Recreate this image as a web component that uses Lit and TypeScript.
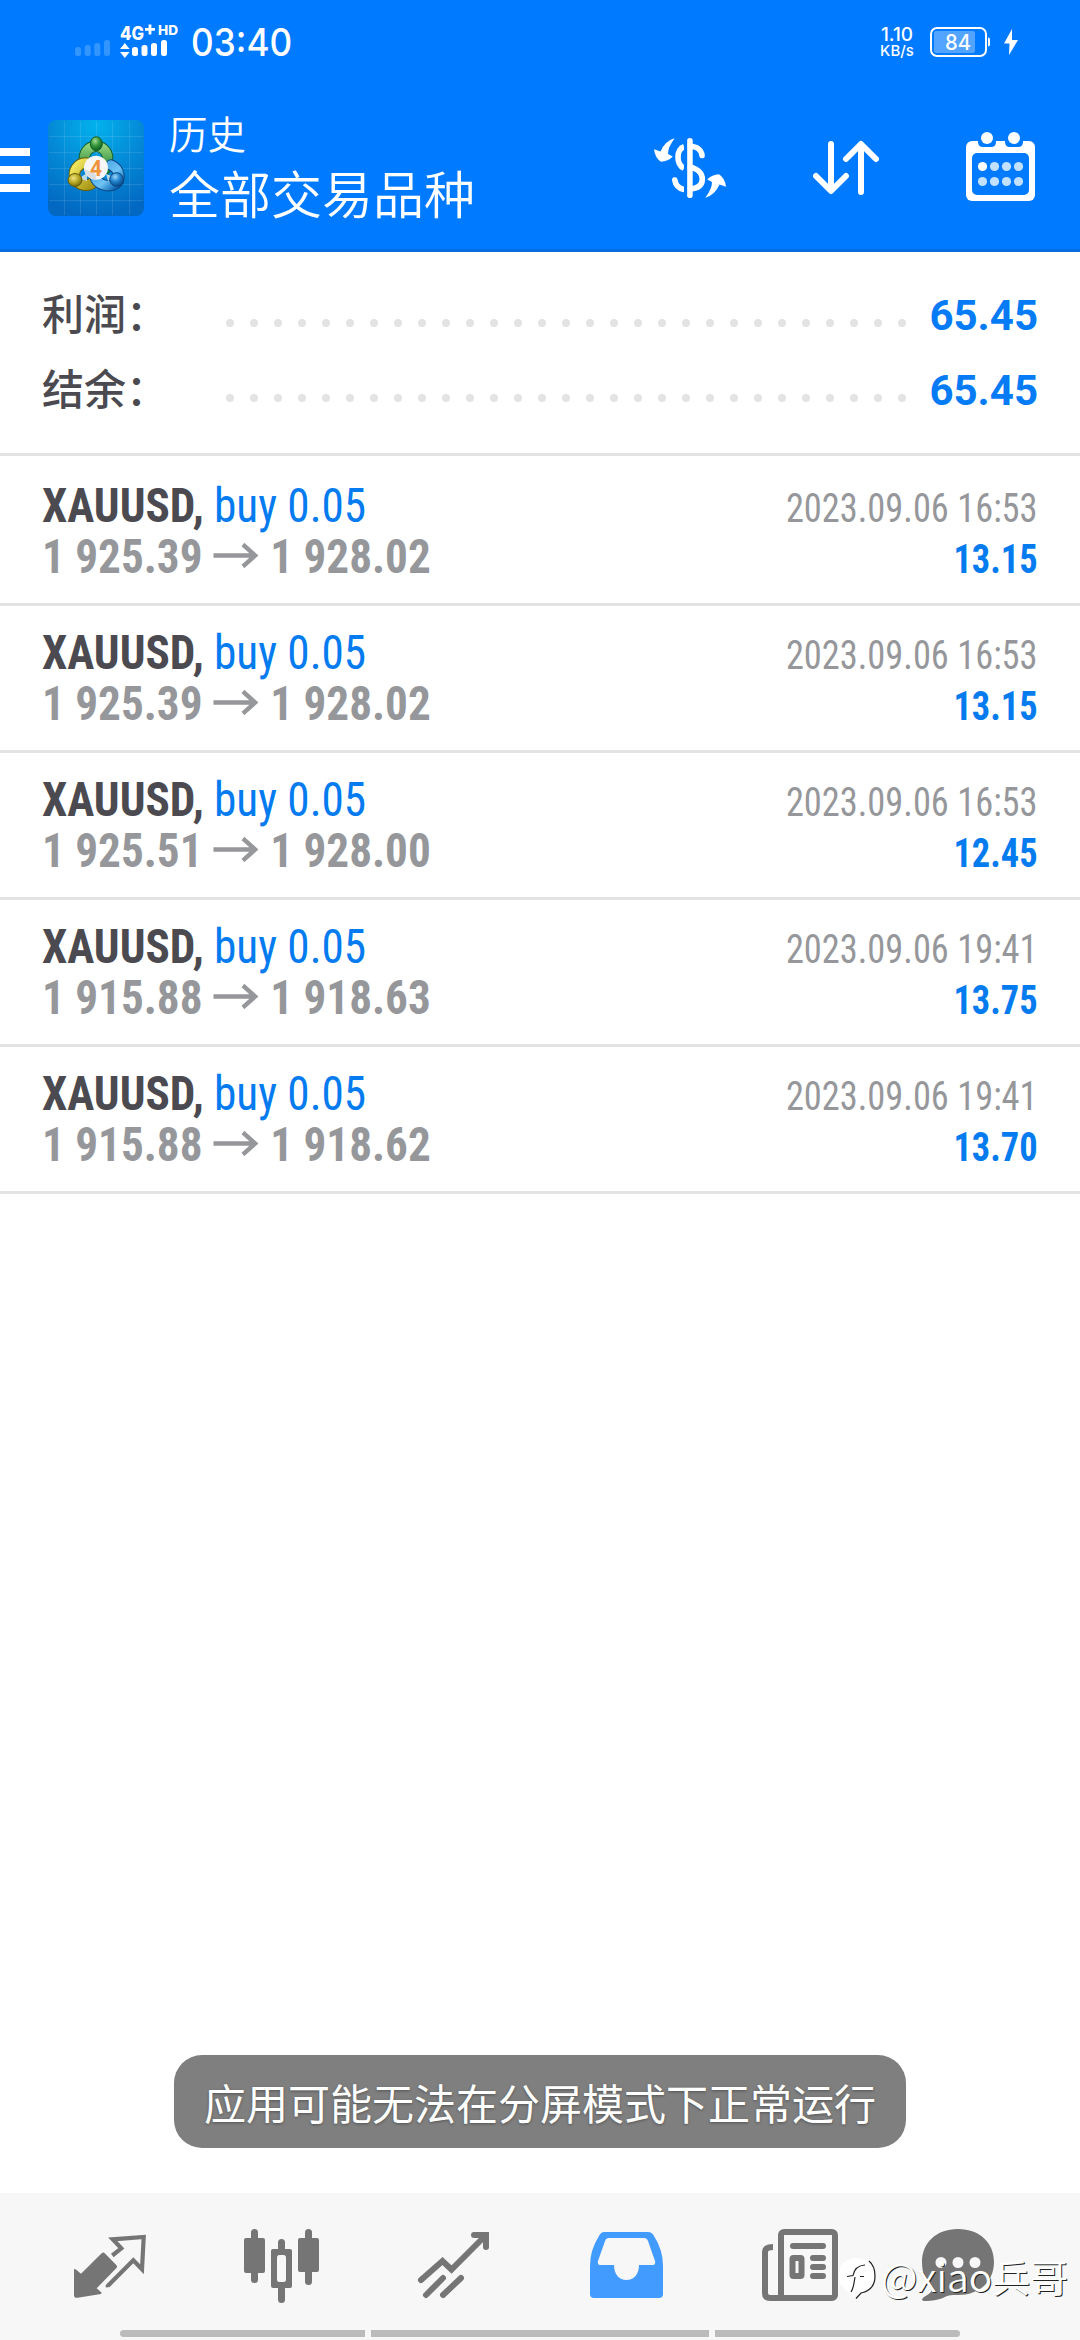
import { LitElement, html, css, svg } from "lit";
import { customElement, property } from "lit/decorators.js";

interface Deal {
  open: string;
  close: string;
  time: string;
  profit: string;
}

const DEALS: Deal[] = [
  { open: "1 925.39", close: "1 928.02", time: "2023.09.06 16:53", profit: "13.15" },
  { open: "1 925.39", close: "1 928.02", time: "2023.09.06 16:53", profit: "13.15" },
  { open: "1 925.51", close: "1 928.00", time: "2023.09.06 16:53", profit: "12.45" },
  { open: "1 915.88", close: "1 918.63", time: "2023.09.06 19:41", profit: "13.75" },
  { open: "1 915.88", close: "1 918.62", time: "2023.09.06 19:41", profit: "13.70" },
];

@customElement("status-bar")
export class StatusBar extends LitElement {
  static styles = css`
    :host { display: flex; justify-content: space-between; height: 84px; box-sizing: border-box;
      padding: 24px 60px 0 75px; color: #fff; font-family: Inter, "Liberation Sans", sans-serif; }
    .side { display: flex; align-items: flex-start; }
    .sim1 { display: block; margin-top: 16px; }
    .sim2 { display: block; margin-left: 10px; overflow: visible; }
    .clock { font-size: 38px; line-height: 38px; font-weight: 500; margin: -1px 0 0 11px; transform: scaleX(0.925); transform-origin: 0 0; }
    .rate { font-size: 19px; line-height: 17px; font-weight: 500; text-align: center; margin: 2px 15px 0 0; width: 36px; }
    .unit { font-size: 15px; line-height: 16px; }
    .battery { display: block; margin-top: 3px; }
    .level { font: 500 22px Inter, sans-serif; }
    .mark { font: 800 18.5px Inter, sans-serif; }
    .hd { font: 800 13px Inter, sans-serif; }
  `;
  render() {
    return html`
      <div class="side">
        <svg class="sim1" width="35" height="16" fill="#3396ff">
          <rect x="0" y="7" width="6" height="9" rx="2.5" /><rect x="9.7" y="5" width="6" height="11" rx="2.5" />
          <rect x="19.3" y="3" width="6" height="13" rx="2.5" /><rect x="29" y="0" width="6" height="16" rx="2.5" />
        </svg>
        <svg class="sim2" width="60" height="36" fill="#fff">
          <text class="mark" x="0" y="15.500" textLength="24" lengthAdjust="spacingAndGlyphs">4G</text>
          <path d="M25 5.300h10M30 .5v10" stroke="#fff" stroke-width="2.8" />
          <text class="hd" x="38" y="11" textLength="20" lengthAdjust="spacingAndGlyphs">HD</text>
          <path d="M4.8 19l4.8 6H0zM4.8 34l4.8-6H0z" />
          <rect x="12" y="23" width="6" height="9" rx="2.5" /><rect x="21.5" y="21" width="6" height="11" rx="2.5" />
          <rect x="31" y="19" width="6" height="13" rx="2.5" /><rect x="41" y="16" width="6" height="16" rx="2.5" />
        </svg>
        <div class="clock">03:40</div>
      </div>
      <div class="side">
        <div class="rate">1.10<div class="unit">KB/s</div></div>
        <svg class="battery" width="90" height="30">
          <rect x="1" y="1" width="55" height="28" rx="6" fill="none" stroke="#fff" stroke-width="2" />
          <rect x="4" y="4" width="41" height="22" rx="2" fill="#52a4ff" />
          <path d="M58 10.5q2 0 2 2v5q0 2-2 2z" fill="#fff" />
          <text class="level" x="15" y="23" textLength="26" lengthAdjust="spacingAndGlyphs" fill="#fff">84</text>
          <path d="M82 2L74 16.500h5.500L79 28l9-15h-6z" fill="#fff" />
        </svg>
      </div>`;
  }
}

@customElement("app-bar")
export class AppBar extends LitElement {
  static styles = css`
    :host { display: flex; height: 168px; box-sizing: border-box; border-bottom: 3px solid #0a6ddd; color: #fff;
      font-family: "Noto Sans CJK SC", sans-serif; }
    .menu { display: block; margin-top: 64px; }
    .logo { display: block; margin: 36px 0 0 18px; }
    .four { font: 700 22px Roboto, sans-serif; }
    .titles { margin: 21px 0 0 25px; flex: 1; }
    .title { font-size: 38.500px; line-height: 54px; font-weight: 350; }
    .subtitle { font-size: 51px; line-height: 66px; font-weight: 350; }
    .actions { display: flex; gap: 87px; margin: 48px 45px 0 0; }
    .actions svg { display: block; }
  `;
  render() {
    return html`
      <svg class="menu" width="30" height="44" fill="#fff">
        <rect width="30" height="8" /><rect y="18" width="30" height="8" /><rect y="36" width="30" height="8" />
      </svg>
      <svg class="logo" width="96" height="96" viewBox="0 0 96 96">
        <defs>
          <radialGradient id="bg" cx=".5" cy=".05" r=".95">
            <stop offset="0" stop-color="#02b2ec" /><stop offset=".5" stop-color="#048ad7" /><stop offset="1" stop-color="#0268c1" />
          </radialGradient>
          <linearGradient id="gr" x2="0" y2="1"><stop stop-color="#8fd07a" /><stop offset="1" stop-color="#1f8435" /></linearGradient>
          <linearGradient id="ye" x2="1" y2="1"><stop stop-color="#f5ea62" /><stop offset="1" stop-color="#a39210" /></linearGradient>
          <linearGradient id="bl" x2="1" y2="1"><stop stop-color="#3c9ce0" /><stop offset=".6" stop-color="#70c4f4" /><stop offset="1" stop-color="#0b67b4" /></linearGradient>
          <radialGradient id="gb" cx=".4" cy=".3" r=".7"><stop stop-color="#a6dd97" /><stop offset=".5" stop-color="#38983c" /><stop offset="1" stop-color="#0f5f22" /></radialGradient>
          <radialGradient id="yb" cx=".4" cy=".35" r=".7"><stop stop-color="#f0e584" /><stop offset=".5" stop-color="#b9a925" /><stop offset="1" stop-color="#6c6410" /></radialGradient>
          <radialGradient id="bb" cx=".4" cy=".3" r=".7"><stop stop-color="#9bd8fa" /><stop offset=".5" stop-color="#2184cd" /><stop offset="1" stop-color="#0a4c8d" /></radialGradient>
        </defs>
        <rect width="96" height="96" rx="8" fill="url(#bg)" />
        <path d="M16.500 1v94M32.500 1v94M48.500 1v94M64.500 1v94M81.500 1v94M1 16.500h94M1 32.500h94M1 48.500h94M1 64.500h94M1 80.500h94" stroke="#fff" stroke-opacity=".11" />
        <g fill="none" stroke-linecap="round">
          <path d="M37 41a11.500 11.500 0 1 1 22 0l-2 8" stroke="#145f2c" stroke-width="11.500" />
          <path d="M37 41a11.500 11.500 0 1 1 22 0l-2 8" stroke="url(#gr)" stroke-width="9.500" />
          <path d="M38 43c-8 0-14 8-10.500 16 4 7.500 14 8.500 19 2" stroke="#665c0c" stroke-width="11.500" />
          <path d="M38 43c-8 0-14 8-10.500 16 4 7.500 14 8.500 19 2" stroke="url(#ye)" stroke-width="9.500" />
          <path d="M63 45c9 4 10.500 15 4 19-8 4-18 0-20-7" stroke="#0c4683" stroke-width="11.500" />
          <path d="M63 45c9 4 10.500 15 4 19-8 4-18 0-20-7" stroke="url(#bl)" stroke-width="9.500" />
        </g>
        <path d="M30 59l9-6v8zM67 57l-9-3 2 7z" fill="#e8f0f0" fill-opacity=".8" />
        <ellipse cx="48.300" cy="23.700" rx="6" ry="7" fill="url(#gb)" stroke="#145f2c" />
        <ellipse cx="27" cy="60" rx="7" ry="6.500" fill="url(#yb)" stroke="#665c0c" />
        <circle cx="68.500" cy="59.500" r="6.800" fill="url(#bb)" stroke="#0c4683" />
        <circle cx="48" cy="47.700" r="12" fill="#f6f6f7" />
        <path d="M36.200 50q6 0 11.800 5v4.500a12 12 0 0 1-11.800-9.500z" fill="#d9dce0" />
        <text class="four" x="48" y="55.500" text-anchor="middle" fill="#f0933a" textLength="12" lengthAdjust="spacingAndGlyphs">4</text>
      </svg>
      <div class="titles">
        <div class="title">历史</div>
        <div class="subtitle">全部交易品种</div>
      </div>
      <div class="actions">
        <svg width="72" height="72" viewBox="654 132 72 72">
          <g fill="none" stroke="#fff" stroke-width="5.600" stroke-linecap="round">
            <path d="M689.900 140.800v54.400" />
            <path d="M684 146.700C676.500 149 675.500 164 684 168.300" stroke-linecap="butt" />
            <path d="M690 146.300C697 146.500 701.500 150 702 155.500M690 167C699 169.500 702.300 173 702.300 179.300 702.300 185 698.300 188.300 690.300 189" />
            <path d="M674.800 180C675.500 185 679 188.500 683 189.300" />
          </g>
          <path d="M684 140h3.100v54.500H684z" fill="#007aff" />
          <path d="M674.700 138.300Q665 141 660.500 151.500L654 149.300Q655 158 661 161.800 668 161.500 672.800 156.500L668 154Q668 147 674.700 138.300z" fill="#fff" />
          <path d="M705.300 197.700Q715 195 719.500 184.500L726 186.700Q725 178 719 174.200 712 174.500 707.200 179.500L712 182Q712 189 705.300 197.700z" fill="#fff" />
        </svg>
        <svg width="66" height="72" viewBox="813 132 66 72" fill="none" stroke="#fff" stroke-width="6" stroke-linecap="round" stroke-linejoin="round">
          <path d="M831 144v46M816 176l15 15 15-15M861 192v-46M846 159l15-15 15 15" />
        </svg>
        <svg width="69" height="72" viewBox="966 132 69 72">
          <rect x="966" y="141" width="69" height="60" rx="6" fill="#fff" />
          <rect x="972" y="153" width="57" height="42" rx="5" fill="#007aff" />
          <path d="M978 140v2q0 5 5 5h8q5 0 5-5v-2zM1005 140v2q0 5 5 5h8q5 0 5-5v-2z" fill="#007aff" />
          <circle cx="987" cy="138" r="6" fill="#fff" /><circle cx="1014" cy="138" r="6" fill="#fff" />
          ${[0, 1, 2, 3, 4, 5, 6, 7].map(
            (i) => svg`<circle cx=${982.5 + (i % 4) * 12} cy=${166.5 + Math.floor(i / 4) * 15} r="4.6" fill=${i === 0 ? "#fff" : "#c2e0ff"} />`
          )}
        </svg>
      </div>`;
  }
}

@customElement("summary-panel")
export class SummaryPanel extends LitElement {
  static styles = css`
    :host { display: block; height: 204px; box-sizing: border-box; padding: 26px 42px 0; border-bottom: 3px solid #e3e3e3; }
    .line { display: flex; align-items: center; height: 75px; }
    .label { width: 188px; height: 75px; font: 500 42px/68px "Noto Sans CJK SC", sans-serif; color: #4b4a50; }
    .dots { display: flex; flex: none; justify-content: space-between; width: 680px; margin: 14px 0 0 -4px; }
    .dot { width: 8px; height: 8px; border-radius: 50%; background: #e3e3e3; }
    .value { flex: 1; text-align: right; font: 700 42px/75px Roboto, sans-serif; color: #057bf5; }
  `;
  render() {
    return html`${["利润：", "结余："].map(
      (label) => html`<div class="line">
        <div class="label">${label}</div>
        <div class="dots">${Array.from({ length: 29 }, () => html`<span class="dot"></span>`)}</div>
        <div class="value">65.45</div>
      </div>`
    )}`;
  }
}

@customElement("deal-row")
export class DealRow extends LitElement {
  static styles = css`
    :host { display: flex; justify-content: space-between; height: 147px; box-sizing: border-box; padding: 21px 42px 0;
      border-bottom: 3px solid #e3e3e3; font-family: "Roboto Condensed", Roboto, sans-serif; font-stretch: 75%; white-space: nowrap; }
    .main { font-size: 48px; line-height: 51px; transform: scaleX(0.941); transform-origin: 0 0; }
    .symbol { font-weight: 700; color: #4b4a50; }
    .side { color: #057bf0; }
    .prices { display: flex; font-weight: 700; color: #96979b; }
    .arrow { display: block; margin: 11px 12px 0 11px; }
    .info { text-align: right; font-size: 40px; line-height: 51px; padding-top: 3px; transform: scaleX(0.91); transform-origin: 100% 0; }
    .time { color: #96979b; }
    .profit { font-weight: 700; color: #057bf0; }
  `;
  @property({ attribute: false }) deal!: Deal;
  render() {
    const d = this.deal;
    return html`
      <div class="main">
        <div><span class="symbol">XAUUSD,</span> <span class="side">buy 0.05</span></div>
        <div class="prices">${d.open}<svg class="arrow" width="49" height="26" fill="none" stroke="#96979b" stroke-width="4.500"><path d="M0 13.500h45M31.500 2.500l13 11-13 11" /></svg>${d.close}</div>
      </div>
      <div class="info">
        <div class="time">${d.time}</div>
        <div class="profit">${d.profit}</div>
      </div>`;
  }
}

@customElement("nav-bar")
export class NavBar extends LitElement {
  static styles = css`
    :host { display: block; position: relative; height: 147px; background: #f7f7f7; }
    .tabs { display: block; height: 137px; }
    .home { display: flex; gap: 6px; padding: 0 120px; height: 7px; }
    .seg { background: #bbb; flex: 245; }
    .mid { flex: 338; }
    .first { border-radius: 4px 0 0 4px; }
    .last { border-radius: 0 4px 4px 0; }
    .mark { position: absolute; left: 838px; top: 57px; display: flex; align-items: center; gap: 5px;
      color: #fff; font: 350 38px/50px "Noto Sans CJK SC", sans-serif; text-shadow: 1px 1px 0 #222; white-space: nowrap; }
    .latin { font-size: 39px; }
    .mark svg { display: block; margin-top: 7px; }
  `;
  render() {
    return html`
      <svg class="tabs" width="1080" height="137" viewBox="0 2193 1080 137" fill="#757575">
        <path d="M74 2269l2 .4 5 4.300 20.700-20.400q1.600-1.800 3.300.2l11 11.200q2.200 1.800.2 3.600l-19.500 20 5 4.400-.7 1.300-23.500 3.800q-3.500.4-3.500-2.800z" />
        <g fill="none" stroke="#757575" stroke-width="4.200">
          <path d="M112.300 2255.500l9-7.200-8.600-9 31-2.300-1.700 32.300-8.700-9-25.600 25.700" />
        </g>
        <circle cx="107" cy="2286" r="1.500" />
        <rect x="244" y="2238" width="21" height="35" rx="2" /><rect x="251" y="2229" width="7" height="54" rx="3.500" />
        <rect x="298" y="2238" width="21" height="34" rx="2" /><rect x="305" y="2229" width="7" height="56" rx="3.500" />
        <rect x="278" y="2239" width="7" height="64" rx="3.500" /><rect x="271" y="2249" width="21" height="39" rx="2" />
        <rect x="277" y="2255" width="9" height="27" rx="2.500" fill="#f7f7f7" />
        <g fill="none" stroke="#757575" stroke-width="6" stroke-linecap="round">
          <path d="M421 2280l21.500-19 9 8.500 34-34M474 2235h12v12" />
          <path d="M426 2295l17-17M443 2295l18-17" />
        </g>
        <path fill="#429bff" fill-rule="evenodd" d="M604 2232h44q4 0 6 4 9 14 9 30v28q0 4-4 4h-65q-4 0-4-4v-28q0-16 9-30 2-4 5-4zM609 2238q-3 0-4 3l-7 20q-1 4 3 4h13c0 9 5 15 12.500 15s12.500-6 12.500-15h13q4 0 3-4l-7-20q-1-3-4-3z" />
        <g fill="none" stroke="#757575" stroke-width="6">
          <rect x="781" y="2232" width="54" height="66" rx="3" />
          <path d="M773 2247q-8 0-8 5v41q0 5 5 5h14" />
        </g>
        <g stroke="#757575" stroke-width="6" stroke-linecap="round">
          <path d="M793 2246h30M813 2258h10M813 2267h10M813 2276h10" />
          <rect x="792.500" y="2258" width="9" height="18" rx="1" fill="none" stroke-linejoin="round" />
        </g>
        <path d="M958 2229c22 0 36 14 36 33s-14 33-36 33c-6 0-8 0-11 1-7 4-15 5-23 5q-4-1 0-4c5-3 8-5 8-8-6-7-10-15-10-27 0-19 14-33 36-33z" />
        <g fill="#f7f7f7"><circle cx="941" cy="2262.500" r="5.500" /><circle cx="958" cy="2262.500" r="5.500" /><circle cx="975" cy="2262.500" r="5.500" /></g>
      </svg>
      <div class="home"><span class="seg first"></span><span class="seg mid"></span><span class="seg last"></span></div>
      <div class="mark">
        <svg width="38" height="44" viewBox="0 0 38 44">
          <path d="M15 41l5-4Q36 34 36 19 36 1 18 1 1 2 1 19q0 12 10 16" fill="#fff" />
          <path d="M18 41.500l5-5.500Q37 33 37 19 37 9 31 4" fill="none" stroke="#222" stroke-width="1.200" />
          <path d="M9 19.500l6-1q2-10 12-10.500M13 35q2-3 3-9l1-6M22 19.500h4" fill="none" stroke="#222" stroke-width="1.200" />
        </svg>
        <span><span class="latin">@xiao</span>兵哥</span>
      </div>`;
  }
}

@customElement("app-root")
export class AppRoot extends LitElement {
  static styles = css`
    :host { display: flex; flex-direction: column; width: 1080px; height: 2340px; background: #fff; overflow: hidden; }
    .top { background: #007aff; }
    .list { flex: 1; padding-top: 3px; }
    .toast { align-self: center; box-sizing: border-box; width: 732px; height: 93px; margin-bottom: 45px; border-radius: 28px;
      background: #7f7f7f; color: #fff; text-align: center; font: 400 42px/93px "Noto Sans CJK SC", sans-serif;
      text-shadow: 0 1px 3px rgba(0, 0, 0, 0.35); white-space: nowrap; }
  `;
  render() {
    return html`
      <div class="top"><status-bar></status-bar><app-bar></app-bar></div>
      <summary-panel></summary-panel>
      <div class="list">${DEALS.map((d) => html`<deal-row .deal=${d}></deal-row>`)}</div>
      <div class="toast">应用可能无法在分屏模式下正常运行</div>
      <nav-bar></nav-bar>`;
  }
}
